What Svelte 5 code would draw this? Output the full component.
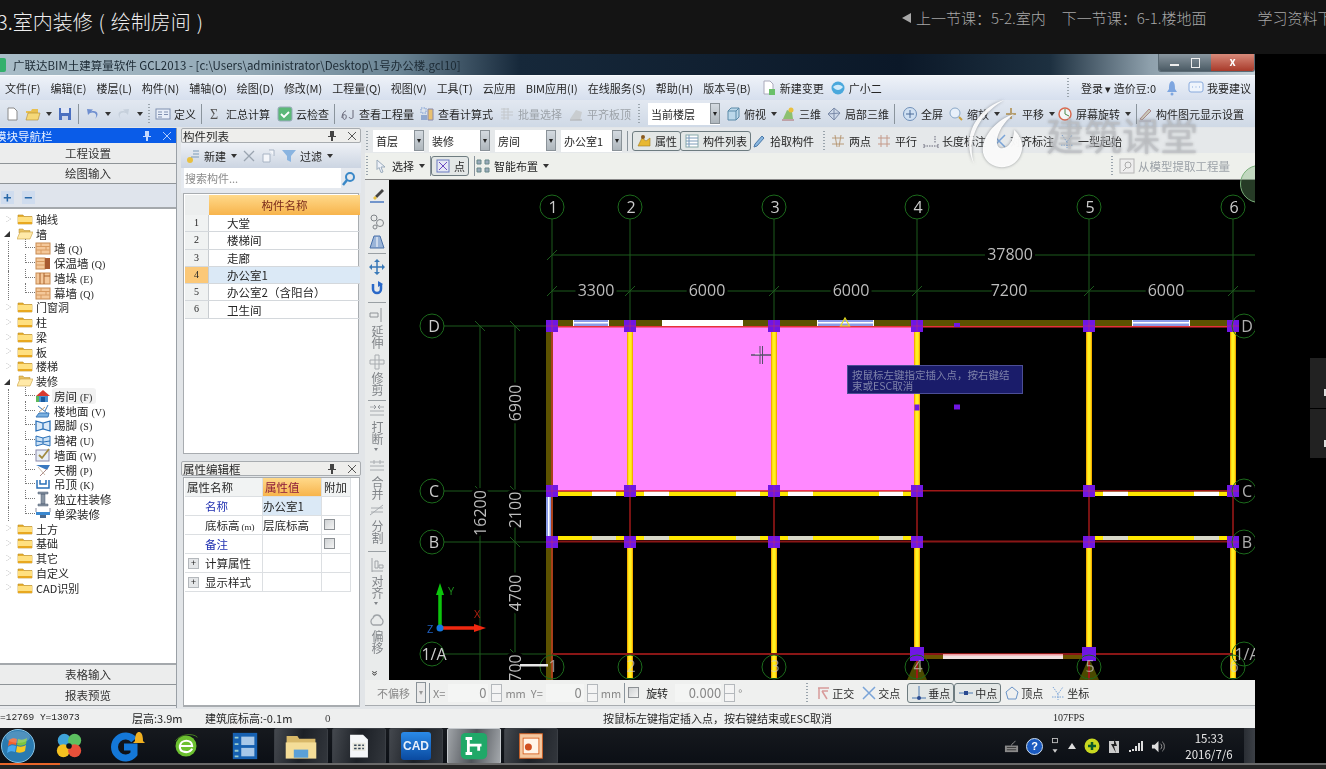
<script>
  const ic = (body) => `<svg viewBox="0 0 16 16" width="16" height="16">${body}</svg>`;
  const icons = {
    doc: ic('<path d="M4 2h6l3 3v9H4z" fill="#fff" stroke="#8a8a8a"/>'),
    open: ic('<path d="M1 5h5l1-2h6v4H1z" fill="#e8c050"/><path d="M1 14l2-7h12l-2 7z" fill="#f5d878" stroke="#b08a30" stroke-width=".6"/>'),
    save: ic('<rect x="2" y="2" width="12" height="12" fill="#4a6fc0"/><rect x="4" y="2" width="8" height="5" fill="#dfe6f5"/><rect x="5" y="10" width="6" height="4" fill="#c9d3ea"/>'),
    undo: ic('<path d="M11 13c3-4 0-8-5-6L4 9 3 3l6 .5-2 2c6-2 9 3 4 7.500z" fill="#6f8fd0"/>'),
    redo: ic('<path d="M5 13c-3-4 0-8 5-6l2 2 1-6-6 .5 2 2C3 3.500 0 8.500 5 13z" fill="#c6d0dc"/>'),
    def: ic('<rect x="1" y="3" width="14" height="10" fill="#e8eef8" stroke="#7f8fb0"/><path d="M3 6h4M3 8.500h4M3 11h4M9 6h4M9 8.500h4" stroke="#7f8fb0"/>'),
    sum: ic('<text x="3" y="13" font-size="14" fill="#555" font-family="Liberation Serif">Σ</text>'),
    cloud: ic('<rect x="1" y="1" width="14" height="14" rx="2" fill="#5cb878" stroke="#9ab"/><path d="M4 8l3 3 5-5" stroke="#fff" stroke-width="1.800" fill="none"/>'),
    sj: ic('<path d="M2 12c0-4 2-7 4-7M3 9c2-1 4 0 3 3s-4 1-3-3M13 4v7c0 2-3 2-4 0" stroke="#667" fill="none"/>'),
    calc: ic('<path d="M2 2h5v5H2z" fill="none" stroke="#7a9ad0" stroke-dasharray="1.500 1"/><path d="M2 9h6v5H2z" fill="#90a8d0"/><path d="M9 3h5v11H9z" fill="#e8c070" stroke="#88a"/>'),
    batch: ic('<path d="M2 3h8M2 6h12M2 9h12M2 12h8M5 2v12M9 2v12" stroke="#c4c8cc"/>'),
    level: ic('<path d="M2 13l6-9 6 2-2 8z" fill="#c9cdd0"/><path d="M2 14h12" stroke="#aaa"/>'),
    top: ic('<path d="M3 5l3-3h8v9l-3 3H3z" fill="#bcd8ea" stroke="#5a8aa8"/><path d="M3 5h8v9M11 5l3-3" stroke="#5a8aa8" fill="none"/>'),
    d3: ic('<path d="M3 13l4-9 5 2 1 7z" fill="#8cc070"/><circle cx="11" cy="4" r="2.500" fill="#e8c040"/><path d="M2 14h12" stroke="#a66"/>'),
    local: ic('<path d="M8 2l6 5-6 7-6-6z" fill="#cdd8e8" stroke="#7a8aa8"/><path d="M8 2v12M2 8l12-1" stroke="#7a8aa8"/>'),
    full: ic('<circle cx="8" cy="8" r="6.500" fill="#cfe0f2" stroke="#6f8fb8"/><path d="M8 4v8M4 8h8" stroke="#4a6a98"/>'),
    zoom: ic('<circle cx="7" cy="7" r="5" fill="#e8f0fa" stroke="#8aa8c8"/><path d="M11 11l3 3" stroke="#c8a040" stroke-width="2"/>'),
    pan: ic('<path d="M8 2v11M3 8h10" stroke="#b8a070" stroke-width="2"/>'),
    rot: ic('<circle cx="8" cy="8" r="6" fill="#f4f6f8" stroke="#d86a50" stroke-width="1.500"/><path d="M8 3v5l4 2" stroke="#4a8a4a" fill="none"/>'),
    set: ic('<path d="M3 13L12 3l2 2-9 9z" fill="#c8c8b8" stroke="#a88"/><path d="M2 15h12" stroke="#88a"/>'),
    newb: ic('<circle cx="5" cy="12" r="3" fill="#e8c040"/><path d="M8 3h6M8 6h6M6 9h8" stroke="#7a9ab8"/>'),
    x: ic('<path d="M3 3l10 10M13 3L3 13" stroke="#9aa4b0" stroke-width="1.300"/>'),
    copy: ic('<path d="M2 6h7v8H2zM8 2h5v6" fill="#f4f6fa" stroke="#a8b4c4"/>'),
    filter: ic('<path d="M1 2h14L10 8v6L6 12V8z" fill="#8ab4e0"/>'),
    mag: ic('<circle cx="9" cy="6" r="4" fill="none" stroke="#3a88c8" stroke-width="2"/><path d="M6 9l-4 5" stroke="#3a88c8" stroke-width="2.500"/>'),
    attr: ic('<path d="M2 13l4-8 4 3 4-3v8z" fill="#e8b830" stroke="#a07820" stroke-width=".6"/><circle cx="7" cy="4" r="2" fill="#8a5a20"/>'),
    list: ic('<rect x="2" y="2" width="12" height="12" fill="#fff" stroke="#8aa"/><path d="M5 2v12M2 5h12M2 8h12M2 11h12" stroke="#7a9ab8"/>'),
    pick: ic('<path d="M3 14l1-3 7-8 2 2-7 8z" fill="#8ab8e0" stroke="#4a78a8"/>'),
    two: ic('<path d="M2 5h12M2 11h12M5 2l2 12M11 2l-2 12" stroke="#b89a78"/>'),
    par: ic('<path d="M2 5h12M2 11h12M5 2v12M11 2v12" stroke="#c49a8a"/>'),
    len: ic('<path d="M1 13h14M1 11v4M15 11v4M12 3v7" stroke="#667" stroke-dasharray="1.500 1"/>'),
    arrow: ic('<path d="M4 2l8 7H8l2 5-2 .5-2-5-2 2z" fill="#eef2f8" stroke="#9ab"/>'),
    pt: ic('<rect x="2" y="2" width="12" height="12" fill="#e4e8f4" stroke="#6a7ac0"/><path d="M4 4l8 8M12 4l-8 8" stroke="#6a4ac0"/>'),
    smart: ic('<path d="M2 2h4v4H2zM10 2h4v4h-4zM2 10h4v4H2zM10 10h4v4h-4z" fill="#9ab" stroke="#688"/>'),
    extract: ic('<rect x="1" y="1" width="14" height="14" fill="#eee" stroke="#b4b4b4"/><circle cx="9" cy="7" r="3" fill="none" stroke="#aaa"/><path d="M7 10l-3 3" stroke="#aaa"/>'),
    ortho: ic('<path d="M3 3h11M4 3v11M7 6h6M7 6l5 8" stroke="#d89a9a" stroke-width="1.500" fill="none"/>'),
    cross: ic('<path d="M2 2l12 12M14 2L2 14" stroke="#7aa4d8" stroke-width="1.500"/>'),
    perp: ic('<path d="M1 13h14M8 1v12" stroke="#4a78b0"/><circle cx="8" cy="13" r="2" fill="#2a4a90"/>'),
    mid: ic('<path d="M1 8h14" stroke="#4a78b0"/><rect x="6" y="6" width="4" height="4" fill="#2a4a90"/>'),
    apex: ic('<path d="M8 2l6 5-2 7H4L2 7z" fill="none" stroke="#6a94c8"/>'),
    coord: ic('<path d="M3 2l5 7 5-7M8 9v6M2 12h12" stroke="#7aa4d8" stroke-dasharray="1.500 1" fill="none"/>'),
    bell: ic('<path d="M8 1c-3 1-3 5-3 8l-2 3h10l-2-3c0-3 0-7-3-8z" fill="#7ea6e0"/><circle cx="8" cy="14" r="1.500" fill="#7ea6e0"/>'),
    chat: ic('<rect x="1" y="2" width="14" height="10" rx="2" fill="#eef4fc" stroke="#88aadd"/><path d="M4 7h1M7.500 7h1M11 7h1" stroke="#88aadd"/>'),
    fnew: ic('<path d="M3 1h6l3 3v10H3z" fill="#fff" stroke="#aab"/><path d="M8 9h6v6H8z" fill="#6ac06a"/>'),
    gxe: ic('<circle cx="8" cy="8" r="6.500" fill="#4aa8dc"/><path d="M3 7c3-3 7-3 10 0-3 4-7 4-10 0z" fill="#cfeafa"/>'),

    brick: ic('<rect x="1" y="3" width="14" height="11" fill="#f4c89a" stroke="#c88a50"/><path d="M1 6.500h14M1 10h14M6 3v3.500M11 6.500V10M6 10v4" stroke="#d89a60"/>'),
    insul: ic('<rect x="1" y="3" width="9" height="11" fill="#f4c89a" stroke="#c88a50"/><rect x="10" y="3" width="5" height="11" fill="#a85a30"/><path d="M1 6.500h9M1 10h9" stroke="#d89a60"/>'),
    pier: ic('<rect x="1" y="3" width="14" height="11" fill="#f4c89a" stroke="#c88a50"/><path d="M5 3v11M9 3v11M9 6h6" stroke="#a8602a"/>'),
    room: ic('<path d="M1 8l7-6 7 6z" fill="#d83a30"/><rect x="3" y="8" width="10" height="6" fill="#4a90d0"/><rect x="6" y="9" width="4" height="5" fill="#1a5aa0"/><rect x="1" y="8" width="3" height="6" fill="#5cb85c"/>'),
    floor: ic('<path d="M1 14l3-4h10l-1 4z" fill="#7ab0e0" stroke="#3a78b8"/><path d="M3 3l9 7M13 2l-3 6" stroke="#3a78b8"/><path d="M4 9l6-5" stroke="#c8a070"/>'),
    skirt: ic('<path d="M1 4l7 2 7-2v10l-7-2-7 2zM8 6v6" fill="#dceaf8" stroke="#2a70b8" stroke-width="1.300"/>'),
    dado: ic('<path d="M1 4l7 2 7-2v10l-7-2-7 2zM8 6v6M1 9l7 1 7-1" fill="#cce2f6" stroke="#2a70b8"/>'),
    wallf: ic('<rect x="1" y="3" width="13" height="11" fill="#e8eef6" stroke="#88a"/><path d="M4 8l3 3 7-9" stroke="#a08a40" stroke-width="1.800" fill="none"/>'),
    ceil: ic('<path d="M1 3h14l-3 5z" fill="#3a78c0"/><path d="M5 14l7-7" stroke="#a88" /><path d="M3 5l7 8" stroke="#cba"/>'),
    hang: ic('<path d="M2 4v8h12V4M5 4v4h6V4" fill="none" stroke="#2a70b8" stroke-width="1.500"/>'),
    colf: ic('<path d="M3 1h10v2H3zM6 3h4v10H6zM3 13h10v2H3z" fill="#8a96a4" stroke="#4a5a70" stroke-width=".5"/>'),
    beam: ic('<path d="M1 6h14v3H1z" fill="#3a88d0"/><path d="M5 9v3h6V9" fill="#4a6a90"/><path d="M1 2v4M15 2v4" stroke="#889"/>'),

    ebrush: ic('<path d="M13 1L6 8l2 2 7-7z" fill="#444"/><path d="M6 8l-2 2 2 2 2-2z" fill="#e8c040"/><path d="M1 14h14" stroke="#4a78c0" stroke-width="1.500"/>'),
    ecirc: ic('<circle cx="5" cy="4" r="3" fill="none" stroke="#808488"/><circle cx="11" cy="9" r="3.500" fill="none" stroke="#808488"/><circle cx="6" cy="13" r="2" fill="none" stroke="#808488"/>'),
    road: ic('<path d="M5 2h6l4 12H1z" fill="#9ab4d8" stroke="#4a70a8"/><path d="M8 3v10" stroke="#fff"/>'),
    move: ic('<path d="M8 1v14M1 8h14" stroke="#3a7ab8" stroke-width="1.500"/><path d="M8 0l3 3H5zM8 16l3-3H5zM0 8l3-3v6zM16 8l-3-3v6z" fill="#3a7ab8"/>'),
    refresh: ic('<path d="M4 4v5a4 4 0 0 0 8 0V4" fill="none" stroke="#2a68c8" stroke-width="2.500"/><path d="M9 1l5 3-5 3z" fill="#2a68c8"/>'),
    extend: ic('<path d="M12 1v14M1 6h8v4H1z" fill="none" stroke="#909498"/>'),
    trim: ic('<path d="M1 6h14v4H1zM6 1h4v14H6z" fill="none" stroke="#a8acb0"/>'),
    brk: ic('<path d="M1 4h5M10 4h5M1 12h14M1 8h14" stroke="#a8acb0"/><path d="M5 2l2 2-2 2M11 2L9 4l2 2" fill="none" stroke="#909498"/>'),
    merge: ic('<path d="M1 4h14M1 12h14M5 2v4M11 2v4M1 8h14" stroke="#a8acb0"/>'),
    split: ic('<path d="M1 13L14 3M2 6h12M2 10h12" stroke="#a8acb0"/>'),
    alignv: ic('<path d="M3 1v14M3 14h11M6 4h3v7H6zM10 8h4v3h-4z" fill="none" stroke="#a0a4a8"/>'),
    offset: ic('<path d="M4 13a4 4 0 0 1 0-7c1-4 7-4 8 0a4 4 0 0 1 0 7z" fill="none" stroke="#a0a4a8" stroke-width="1.300"/>')
  };

  const F = '<path d="M1 4h5l1 1.500h8V13H1z" fill="#e8b030" stroke="#b88a20" stroke-width=".6"/><path d="M1 6h14v7H1z" fill="#ffe080"/><path d="M1 11h14v2H1z" fill="#e8a820"/>';
  const FO = '<path d="M2 3h4l1 1.500h6V7H2z" fill="#e8c060" stroke="#b88a20" stroke-width=".5"/><path d="M0 13l3-7h13l-3 7z" fill="#ffe9a8" stroke="#c8a040" stroke-width=".6"/>';
  icons.fold = ic(F);
  icons.foldo = ic(FO);

  const menus = ['文件(F)', '编辑(E)', '楼层(L)', '构件(N)', '辅轴(O)', '绘图(D)', '修改(M)', '工程量(Q)', '视图(V)', '工具(T)', '云应用', 'BIM应用(I)', '在线服务(S)', '帮助(H)', '版本号(B)'];

  const row1 = [
    { i: 'doc' }, { i: 'open', c: 1 }, { i: 'save' }, { sep: 1 }, { i: 'undo', c: 1 }, { i: 'redo', c: 1, off: 1 }, { grip: 1 },
    { i: 'def', l: '定义' }, { sep: 1 }, { i: 'sum', l: '汇总计算' }, { i: 'cloud', l: '云检查', m: 2 }, { sep: 1 },
    { i: 'sj', l: '查看工程量' }, { i: 'calc', l: '查看计算式' }, { i: 'batch', l: '批量选择', off: 1, m: 1 }, { i: 'level', l: '平齐板顶', off: 1, m: 1 }, { grip: 1, m: 2 },
    { combo: '当前楼层', w: 72, m: 3 }, { i: 'top', l: '俯视', c: 1 }, { i: 'd3', l: '三维', m: -2 }, { i: 'local', l: '局部三维' }, { sep: 1 },
    { i: 'full', l: '全屏', m: 2 }, { i: 'zoom', l: '缩放', c: 1 }, { i: 'pan', l: '平移', c: 1, m: -2 }, { i: 'rot', l: '屏幕旋转', c: 1, m: -3 }, { sep: 1 },
    { i: 'set', l: '构件图元显示设置', m: -5 }
  ];
  const row3 = [
    { grip: 1 }, { combo: '首层', w: 51 }, { combo: '装修', w: 61 }, { combo: '房间', w: 61 }, { combo: '办公室1', w: 61 }, { sep: 1 },
    { i: 'attr', l: '属性', on: 1, m: -1 }, { i: 'list', l: '构件列表', on: 1, m: -6 }, { i: 'pick', l: '拾取构件', m: -5 }, { grip: 1, m: 4 },
    { i: 'two', l: '两点' }, { i: 'par', l: '平行' }, { i: 'len', l: '长度标注', m: 1 }, { i: 'cross', l: '对齐标注' }, { i: 'coord', l: '一型起始' }
  ];
  const row4 = [
    { grip: 1 }, { i: 'arrow', l: '选择', c: 1 }, { sep: 1 }, { i: 'pt', l: '点', on: 1, m: -5 }, { sep: 1 }, { i: 'smart', l: '智能布置', c: 1, m: -5 }
  ];
  const snaps = [
    { i: 'ortho', l: '正交' }, { i: 'cross', l: '交点' }, { i: 'perp', l: '垂点', on: 1 }, { i: 'mid', l: '中点', on: 1, m: -7 }, { i: 'apex', l: '顶点', m: -4 }, { i: 'coord', l: '坐标' }
  ];

  const tree = [
    { t: '轴线' },
    { t: '墙', open: 1 },
    { t: '墙', k: '(Q)', i: 'brick' }, { t: '保温墙', k: '(Q)', i: 'insul' }, { t: '墙垛', k: '(E)', i: 'pier' }, { t: '幕墙', k: '(Q)', i: 'brick', last: 1 },
    { t: '门窗洞' }, { t: '柱' }, { t: '梁' }, { t: '板' }, { t: '楼梯' },
    { t: '装修', open: 1 },
    { t: '房间', k: '(F)', i: 'room', sel: 1 }, { t: '楼地面', k: '(V)', i: 'floor' }, { t: '踢脚', k: '(S)', i: 'skirt' }, { t: '墙裙', k: '(U)', i: 'dado' },
    { t: '墙面', k: '(W)', i: 'wallf' }, { t: '天棚', k: '(P)', i: 'ceil' }, { t: '吊顶', k: '(K)', i: 'hang' }, { t: '独立柱装修', i: 'colf' }, { t: '单梁装修', i: 'beam', last: 1 },
    { t: '土方' }, { t: '基础' }, { t: '其它' }, { t: '自定义' }, { t: 'CAD识别' }
  ];

  const parts = ['大堂', '楼梯间', '走廊', '办公室1', '办公室2（含阳台）', '卫生间'];

  const vtools = [
    { i: 'ebrush', m: 0 }, { i: 'ecirc', m: 10 }, { i: 'road', m: 4 }, { sep: 1, m: 3 }, { i: 'move', m: 5 }, { i: 'refresh', m: 5 }, { sep: 1, m: 6 },
    { i: 'extend', l: '延伸', m: 4 }, { i: 'trim', l: '修剪', m: 5 }, { sep: 1, m: 4 },
    { i: 'brk', l: '打断', m: 2, c: 1 }, { i: 'merge', l: '合并', m: 13 }, { i: 'split', l: '分割', m: 2 }, { sep: 1, m: 7 },
    { i: 'alignv', l: '对齐', m: 5, c: 1 }, { i: 'offset', l: '偏移', m: 13 }
  ];

  // CAD canvas uses page coordinates, see the viewBox
  const xs = [552, 630, 774, 917, 1089, 1233];
  const Y = { D: 326, C: 491, B: 542, A: 654 };
  const spans = [[596, '3300'], [707, '6000'], [851, '6000'], [1009, '7200'], [1166, '6000']];
  const vdims = [[515, 403, '6900'], [515, 510, '2100'], [515, 593, '4700'], [480, 513, '16200']];
  const rows = [['D', Y.D], ['C', Y.C], ['B', Y.B], ['1/A', Y.A]];
  const whiteC = [[592, 616], [644, 669], [736, 760], [788, 813], [879, 903], [1103, 1128], [1194, 1219]];
  const ticksH = [[552, 255], [552, 291], [630, 291], [774, 291], [917, 291], [1089, 291], [1233, 291]];
  const ticksV = [[480, 326], [515, 326], [480, 491], [515, 491], [515, 542], [515, 654]];
  const wins = [[573, 609], [817, 874], [1132, 1190]];
</script>

{#snippet tool(t)}
  {#if t.sep}
    <i class="sep"></i>
  {:else if t.grip}
    <i class="grip" style:margin-left={t.m ? t.m + 'px' : null}></i>
  {:else if t.combo}
    <span class="combo" style:width={t.w + 'px'} style:margin-left={t.m ? t.m + 'px' : null}><span class="val">{t.combo}</span><i class="drop"></i></span>
  {:else}
    <span class="tool" class:off={t.off} class:on={t.on} style:margin-left={t.m ? t.m + 'px' : null}>
      {#if t.i}<span class="ico">{@html icons[t.i]}</span>{/if}
      {#if t.l}<span>{t.l}</span>{/if}
      {#if t.c}<i class="caret"></i>{/if}
    </span>
  {/if}
{/snippet}

{#snippet pbtns()}
  <span class="pbtns">
    <svg viewBox="0 0 8 10" width="8" height="10"><path d="M2 0h4v5h2v1H5v4H3V6H0V5h2z" fill="currentColor" /></svg>
    <svg viewBox="0 0 8 8" width="8" height="8"><path d="M0 0l8 8M8 0L0 8" stroke="currentColor" stroke-width=".9" /></svg>
  </span>
{/snippet}

{#snippet paneltitle(text)}
  <div class="ptitle"><span>{text}</span>{@render pbtns()}</div>
{/snippet}

<div class="page">
  <header class="top">
    <h1>3.室内装修 ( 绘制房间 )</h1>
    <nav>
      <span class="tri"></span>
      <span>上一节课：5-2.室内</span>
      <span class="next">下一节课：6-1.楼地面</span>
      <span class="dl">学习资料下载</span>
    </nav>
  </header>

  <div class="stage">
    <div class="win">
      <div class="titlebar">
        <span class="appico"></span>
        <span class="apptitle">广联达BIM土建算量软件 GCL2013 - [c:\Users\administrator\Desktop\1号办公楼.gcl10]</span>
        <span class="winbtns">
          <span class="wb"><i class="wmin"></i><i class="wmax"></i></span>
          <span class="wclose">x</span>
        </span>
      </div>

      <div class="menubar">
        {#each menus as m}<span>{m}</span>{/each}
        <span class="tool"><span class="ico">{@html icons.fnew}</span>新建变更</span>
        <span class="tool gxe"><span class="ico">{@html icons.gxe}</span>广小二</span>
        <span class="right">
          <i class="grip"></i>
          <span>登录 ▾ 造价豆:0</span>
          <span class="ico">{@html icons.bell}</span>
          <span class="tool"><span class="ico">{@html icons.chat}</span>我要建议</span>
        </span>
      </div>

      <div class="toolbar">
        {#each row1 as t}{@render tool(t)}{/each}
      </div>

      <div class="main">
        <aside class="nav">
          <div class="ptitle blue"><span>模块导航栏</span>{@render pbtns()}</div>
          <button class="bigbtn">工程设置</button>
          <button class="bigbtn">绘图输入</button>
          <div class="pm"><span>+</span><span>−</span></div>
          <ul class="tree">
            {#each tree as n}
              {#if n.i}
                <li class="child" class:last={n.last}>
                  <span class="ico">{@html icons[n.i]}</span>
                  <span class="lab" class:sel={n.sel}>{n.t}{#if n.k}<small>{n.k}</small>{/if}</span>
                </li>
              {:else}
                <li class="fold">
                  <i class={n.open ? 'tw open' : 'tw'}></i>
                  <span class="ico">{@html n.open ? icons.foldo : icons.fold}</span>
                  <span class="lab">{n.t}</span>
                </li>
              {/if}
            {/each}
          </ul>
          <button class="bigbtn">表格输入</button>
          <button class="bigbtn">报表预览</button>
        </aside>

        <section class="mid">
          {@render paneltitle('构件列表')}
          <div class="listbar">
            <span class="tool"><span class="ico">{@html icons.newb}</span>新建<i class="caret"></i></span>
            <span class="ico">{@html icons.x}</span>
            <span class="ico">{@html icons.copy}</span>
            <span class="tool"><span class="ico">{@html icons.filter}</span>过滤<i class="caret"></i></span>
          </div>
          <div class="search"><span class="hint">搜索构件...</span><span class="ico">{@html icons.mag}</span></div>
          <div class="listbox">
            <div class="lrow head"><span></span><span class="hname">构件名称</span></div>
            {#each parts as p, i}
              <div class="lrow" class:cur={i === 3}><span class="no">{i + 1}</span><span class="nm">{p}</span></div>
            {/each}
          </div>

          {@render paneltitle('属性编辑框')}
          <div class="propbox">
            <div class="prow phead"><span>属性名称</span><span class="pval">属性值</span><span>附加</span></div>
            <div class="prow"><span class="in link">名称</span><span class="cv">办公室1</span><span></span></div>
            <div class="prow"><span class="in">底标高<small>(m)</small></span><span>层底标高</span><span><i class="chk"></i></span></div>
            <div class="prow"><span class="in link">备注</span><span></span><span><i class="chk"></i></span></div>
            <div class="prow"><span class="in"><i class="plus">+</i>计算属性</span><span></span><span></span></div>
            <div class="prow"><span class="in"><i class="plus">+</i>显示样式</span><span></span><span></span></div>
          </div>
        </section>

        <section class="cad">
          <div class="toolbar r3">
            {#each row3 as t}{@render tool(t)}{/each}
          </div>
          <div class="toolbar r4">
            {#each row4 as t}{@render tool(t)}{/each}
            <span class="extract"><i class="grip"></i><span class="tool off"><span class="ico">{@html icons.extract}</span>从模型提取工程量</span></span>
          </div>
          <div class="work">
            <div class="vbar">
              {#each vtools as t}
                {#if t.sep}
                  <hr style:margin-top={t.m + 'px'} />
                {:else}
                  <span class="ico" style:margin-top={t.m + 'px'}>{@html icons[t.i]}</span>
                  {#if t.l}<span class="vtxt" class:arrowed={t.c}>{t.l}</span>{/if}
                {/if}
              {/each}
              <span class="more">»</span>
            </div>
            <div class="canvas">
              <svg viewBox="389 180 866 500" width="866" height="500">
                <!-- axes -->
                <g stroke="#1c5a1c" stroke-width="1" fill="none">
                  {#each xs as x}<line x1={x} y1="219" x2={x} y2="320" />{/each}
                  <line x1="552" y1="255" x2="1255" y2="255" />
                  <line x1="552" y1="291" x2="1255" y2="291" />
                  <line x1="480" y1="326" x2="480" y2="680" />
                  <line x1="515" y1="326" x2="515" y2="680" />
                  {#each rows as r}<line x1="444" y1={r[1]} x2="548" y2={r[1]} />{/each}
                  {#each ticksH as t}<line x1={t[0] - 5} y1={t[1] + 5} x2={t[0] + 5} y2={t[1] - 5} />{/each}
                  {#each ticksV as t}<line x1={t[0] - 5} y1={t[1] - 5} x2={t[0] + 5} y2={t[1] + 5} />{/each}
                </g>

                <rect x="552" y="327" width="365" height="164" fill="#ff88ff" />

                <!-- walls -->
                <rect x="546" y="320" width="6" height="360" fill="#5c5200" />
                <rect x="551" y="327" width="2" height="353" fill="#a8401a" />
                <rect x="546" y="497" width="5" height="39" fill="#8a9ce8" />
                <rect x="548" y="497" width="1.500" height="39" fill="#fff" />
                <rect x="546" y="320" width="687" height="6" fill="#5c5200" />
                {#each wins as w}
                  <rect x={w[0]} y="320" width={w[1] - w[0]} height="6" fill="#8a9ce8" />
                  <rect x={w[0]} y="322" width={w[1] - w[0]} height="1.500" fill="#fff" />
                  <rect x={w[0]} y="320" width="1" height="6" fill="#fff" />
                  <rect x={w[1] - 1} y="320" width="1" height="6" fill="#fff" />
                {/each}
                <rect x="662" y="320" width="81" height="6" fill="#fff" />
                <rect x="552" y="326" width="681" height="1.500" fill="#e8303a" />
                <path d="M840.500 326l4.500-8 4.500 8z" fill="none" stroke="#e8e020" stroke-width="1.200" />

                {#each xs.slice(1) as x}
                  <rect x={x - 3} y="326" width="6" height="165" fill="#f4ac00" />
                  <rect x={x - 1.750} y="326" width="3.500" height="165" fill="#fff020" />
                  <rect x={x - 3} y="542" width="6" height={x === 917 || x === 1089 ? 112 : 136} fill="#f4ac00" />
                  <rect x={x - 1.750} y="542" width="3.500" height={x === 917 || x === 1089 ? 112 : 136} fill="#fff020" />
                  <line x1={x} y1="491" x2={x} y2="542" stroke="#a01818" stroke-width="1.500" />
                {/each}

                {#each [[491.500, 4.500], [536, 4]] as h}
                  <rect x="552" y={h[0]} width="365" height={h[1]} fill="#ffe800" />
                  <rect x="1089" y={h[0]} width="144" height={h[1]} fill="#ffe800" />
                  {#each whiteC as w}
                    <rect x={w[0]} y={h[0]} width={w[1] - w[0]} height={h[1]} fill={h[0] > 500 ? '#d8d8c8' : '#fff'} />
                  {/each}
                {/each}
                <rect x="552" y="490" width="365" height="1.500" fill="#f03050" />
                <rect x="917" y="490" width="316" height="1.500" fill="#a01818" />
                <rect x="552" y="540.500" width="681" height="2" fill="#8a1616" />
                <rect x="552" y="653" width="681" height="2" fill="#8a1616" />

                <rect x="917" y="655" width="172" height="4" fill="#6a5200" />
                <rect x="943" y="654" width="120" height="5" fill="#f0e0e0" />
                <rect x="943" y="654" width="120" height="1.500" fill="#f09aa0" />
                <path d="M907 680l8-18h4l8 18zM1079 680l8-18h4l8 18z" fill="#4a4a00" />
                <rect x="916" y="655" width="2" height="25" fill="#a01818" />
                <rect x="1088" y="655" width="2" height="25" fill="#a01818" />

                <!-- columns -->
                <g fill="#7016e4">
                  {#each xs as x}
                    {#each [Y.D, Y.C, Y.B] as y}
                      <rect x={x - 6} y={y - 6} width="12" height="12" />
                    {/each}
                  {/each}
                  <rect x="910" y="647" width="14" height="14" />
                  <rect x="1082" y="647" width="14" height="14" />
                  <rect x="954" y="323" width="6" height="4" />
                  <rect x="954" y="404.500" width="6" height="5" />
                  <rect x="914.500" y="404.500" width="5" height="6" />
                </g>
                <g stroke="#c83060" stroke-width=".6">
                  {#each xs as x}
                    <line x1={x} y1="320" x2={x} y2="332" />
                    <line x1={x - 6} y1="326" x2={x + 6} y2="326" />
                    <line x1={x} y1="485" x2={x} y2="497" />
                    <line x1={x - 6} y1="491" x2={x + 6} y2="491" />
                    <line x1={x} y1="536" x2={x} y2="548" />
                    <line x1={x - 6} y1="542" x2={x + 6} y2="542" />
                  {/each}
                </g>

                <!-- balloons -->
                <g stroke="#1c6a1c" fill="none">
                  {#each xs as x}
                    <circle cx={x} cy="207" r="12" />
                    <circle cx={x} cy="667" r="12" />
                  {/each}
                  {#each rows as r}
                    <circle cx="432" cy={r[1]} r="12" />
                    <circle cx="1244" cy={r[1]} r="12" />
                  {/each}
                </g>

                <g class="cadtxt">
                  {#each xs as x, i}
                    <text x={x + 1} y="212.500">{i + 1}</text>
                    <text x={x + 1} y="672" opacity=".65">{i + 1}</text>
                  {/each}
                  {#each rows as r}
                    <text x="434" y={r[1] + 5.500}>{r[0]}</text>
                    <text x="1247" y={r[1] + 5.500} opacity=".85">{r[0]}</text>
                  {/each}
                </g>
                <g class="cadtxt halo">
                  <text x="1010" y="260">37800</text>
                  {#each spans as s}<text x={s[0]} y="296">{s[1]}</text>{/each}
                  {#each vdims as v}
                    <text transform="translate({v[0] + 5.500} {v[1]}) rotate(-90)">{v[2]}</text>
                  {/each}
                  <text transform="translate(520.500 668) rotate(-90)">700</text>
                </g>
                <rect x="520" y="664" width="28" height="2.500" fill="#e8e8e8" />

                <!-- origin gizmo -->
                <path d="M440 628V594" stroke="#0cc40c" stroke-width="3.500" />
                <path d="M440 583l-4 12h8z" fill="#0cc40c" />
                <path d="M440 628h36" stroke="#f02810" stroke-width="3.500" />
                <path d="M486 628l-12-4v8z" fill="#f02810" />
                <circle cx="440" cy="628" r="3.500" fill="#1478e0" />
                <text class="axis" x="448" y="595" fill="#1c8a1c">Y</text>
                <text class="axis" x="474" y="618" fill="#b02010">X</text>
                <text class="axis" x="427" y="633" fill="#2060c0">Z</text>

                <!-- cursor -->
                <path d="M751 355h20" stroke="#56506a" stroke-width="1.500" />
                <path d="M760 346v18M762.500 346v18" stroke="#56506a" />
                <path d="M755 354h5" stroke="#fff" stroke-width=".6" />
              </svg>
              <div class="tip">按鼠标左键指定插入点，按右键结束或ESC取消</div>
            </div>
          </div>
          <div class="snapbar">
            <div class="combo off2"><span class="val">不偏移</span><i class="drop"></i></div>
            <i class="sep"></i>
            <span>X=</span><span class="num n0">0</span><i class="spin"></i><span>mm</span>
            <span class="ymark">Y=</span><span class="num n1">0</span><i class="spin"></i><span>mm</span>
            <i class="sep"></i>
            <i class="chk"></i>
            <span class="rot">旋转</span>
            <span class="num n2">0.000</span><i class="spin"></i><span>°</span>
            <span class="snaps">
              <i class="grip"></i>
              {#each snaps as t}{@render tool(t)}{/each}
            </span>
          </div>
          <span class="blob"></span>
        </section>
      </div>

      <div class="status">
        <span class="coords">=12769 Y=13073</span>
        <span class="s2">层高:3.9m</span>
        <span class="s3">建筑底标高:-0.1m</span>
        <span class="s4">0</span>
        <span class="msg">按鼠标左键指定插入点，按右键结束或ESC取消</span>
        <span class="fps">107FPS</span>
      </div>

      <div class="taskbar">
        <span class="orb">
          <svg viewBox="0 0 34 34" width="34" height="34">
            <circle cx="17" cy="17" r="16.500" fill="#2a7ab0" stroke="#8cc4e4" />
            <path d="M8 11c3-2 5-2 8-1l-1 6c-3-1-5-1-8 1z" fill="#f0602c" />
            <path d="M17 10c3 1 6 1 9-1l-1 6c-3 2-6 2-9 1z" fill="#7cc440" />
            <path d="M7 18c3-2 5-2 8-1l-1 6c-3-1-5-1-8 1z" fill="#48a8f0" />
            <path d="M16 17c3 1 6 1 9-1l-1 6c-3 2-6 2-9 1z" fill="#f8c820" />
            <ellipse cx="17" cy="8" rx="12" ry="6" fill="#fff" opacity=".18" />
          </svg>
        </span>
        <span class="tb"><svg viewBox="0 0 32 32" width="30" height="30"><circle cx="11" cy="10" r="7" fill="#3fa2d8"/><circle cx="22" cy="10" r="7" fill="#5cc060"/><circle cx="10" cy="21" r="7" fill="#f4c020"/><circle cx="22" cy="21" r="7" fill="#e8503a"/><circle cx="16" cy="16" r="3" fill="#0d1219"/></svg></span>
        <span class="tb"><svg viewBox="0 0 38 32" width="38" height="32"><path d="M25 10A11 11 0 1 0 25 24V17H15" fill="none" stroke="#1478d8" stroke-width="7"/><path d="M26 11c0-7 2-9 4-9s4 2 4 9l2 2H24z" fill="#f0b020"/></svg></span>
        <span class="tb"><svg viewBox="0 0 32 32" width="28" height="28"><circle cx="16" cy="16" r="12" fill="#6cc030"/><path d="M9 16h14c0-8-13-8-14 0s11 9 14 3" fill="none" stroke="#fff" stroke-width="2.500"/><path d="M4 10C10 2 24 1 29 6" fill="none" stroke="#4a8a20" /></svg></span>
        <span class="tb"><svg viewBox="0 0 32 32" width="30" height="30"><rect x="3" y="2" width="26" height="28" fill="#1660b0"/><rect x="12" y="6" width="14" height="9" fill="#a8c8e8"/><rect x="12" y="18" width="14" height="9" fill="#a8c8e8"/><path d="M5 7h4M5 14h4M5 21h4M5 27h4" stroke="#9cc" stroke-width="2"/></svg></span>
        <span class="tbtn"><svg viewBox="0 0 40 32" width="36" height="30"><path d="M4 5h12l2 3h18v6H4z" fill="#d8b868"/><path d="M3 12h34v18H3z" fill="#f4dd98"/><path d="M12 20h16v9H12z" fill="#5aa0d8"/></svg></span>
        <span class="tbtn"><svg viewBox="0 0 32 32" width="26" height="28"><path d="M5 2h16l6 6v22H5z" fill="#f4f6f8"/><path d="M8 12h16v10H8z" fill="#e8e8e0"/><path d="M10 15h3M15 15h3M20 15h2M10 19h3M15 19h3M20 19h2" stroke="#345" stroke-width="2"/></svg></span>
        <span class="tbtn"><span class="cadico">CAD</span></span>
        <span class="tbtn act"><svg viewBox="0 0 32 32" width="30" height="30"><rect x="2" y="2" width="28" height="28" rx="5" fill="#20a868"/><path d="M7 8h7M10 8v16M7 24h7M10 15h14M21 15v6" stroke="#fff" stroke-width="3" fill="none"/></svg></span>
        <span class="tbtn"><svg viewBox="0 0 32 32" width="28" height="28"><rect x="3" y="2" width="26" height="28" fill="#f4c8a0" stroke="#d86020"/><rect x="7" y="7" width="18" height="18" fill="#fff4e8" stroke="#d86020"/><circle cx="13" cy="17" r="4" fill="#d05020"/></svg></span>
        <span class="tray">
          <svg viewBox="0 0 16 16" width="15" height="15"><path d="M1 7h14v7H1z" fill="#8a8a8a"/><path d="M3 9h10M3 11.500h10" stroke="#333"/><path d="M8 7c0-3 3-2 4-5" stroke="#888" fill="none"/></svg>
          <span class="help">?</span>
          <svg viewBox="0 0 12 20" width="10" height="18"><rect x="3" y="1" width="6" height="5" fill="none" stroke="#ccc"/><path d="M3 14h6l-3 4z" fill="#ccc"/></svg>
          <svg viewBox="0 0 10 10" width="10" height="10"><path d="M5 2l4 6H1z" fill="#ddd"/></svg>
          <svg viewBox="0 0 16 16" width="16" height="16"><circle cx="8" cy="8" r="7.500" fill="#c8d820"/><path d="M8 4v8M4 8h8" stroke="#0a5a2a" stroke-width="2.500"/></svg>
          <svg viewBox="0 0 14 16" width="14" height="16"><path d="M2 3h10v12H2z" fill="#ccc"/><path d="M7 0l3 8H7l2 7-5-9h3z" fill="#222"/></svg>
          <svg viewBox="0 0 16 12" width="16" height="12"><path d="M1 11h2M5 11V9M8 11V6M11 11V3M14 11V1" stroke="#ddd" stroke-width="2"/></svg>
          <svg viewBox="0 0 16 16" width="15" height="15"><path d="M1 6h3l4-4v12l-4-4H1z" fill="#ddd"/><path d="M10 5c2 1 2 5 0 6M12 3c3 2 3 8 0 10" stroke="#999" fill="none"/></svg>
          <span class="clock">15:33<br />2016/7/6</span>
          <span class="desk"></span>
        </span>
      </div>

      <div class="watermark">
        <svg viewBox="0 0 64 68" width="64" height="68">
          <path d="M40 0C14 8-4 36 10 64 2 38 16 14 40 0Z" fill="#fff" opacity=".92" />
          <path d="M50 14C30 20 14 42 20 56c6 14 28 16 36 0 5-11 1-20-6-26 0 10-6 20-14 18C28 44 36 24 50 14Z" fill="#fff" opacity=".94" />
        </svg>
        <span>建筑课堂</span>
      </div>
    </div>

    <div class="side">
      <span class="sidebtn"></span>
      <span class="sidebtn"></span>
    </div>
  </div>

  <div class="progress"><i></i></div>
</div>

<style>
  :global(body) {
    margin: 0;
    background: #000;
  }
  .page {
    width: 1326px;
    height: 769px;
    overflow: hidden;
    font-family: "Noto Sans CJK SC", "Liberation Sans", sans-serif;
    background: #000;
  }
  .top {
    height: 54px;
    background: #141414;
    color: #eee;
    display: flex;
    position: relative;
  }
  .top h1 {
    margin: 8px 0 0 -3px;
    font-size: 20px;
    font-weight: 300;
    line-height: 27px;
    word-spacing: 1.5px;
    white-space: nowrap;
  }
  .top nav {
    margin-left: auto;
    padding-top: 8px;
    width: 424px;
    display: flex;
    color: #a8a8a8;
    font-size: 15px;
    font-weight: 300;
    line-height: 20px;
    white-space: nowrap;
    overflow: hidden;
  }
  .tri {
    width: 0;
    height: 0;
    margin: 5px 5px 0 0;
    border: 5.5px solid transparent;
    border-left: 0;
    border-right: 9px solid #a8a8a8;
  }
  .next { margin-left: 16px; }
  .dl { margin-left: 51px; }

  .stage {
    height: 709px;
    display: flex;
  }
  .win {
    width: 1255px;
    height: 709px;
    flex: none;
    position: relative;
    overflow: hidden;
    display: flex;
    flex-direction: column;
    background: #e2e5e8;
    font-size: 11px;
    color: #262626;
    filter: blur(.5px);
  }
  .ico {
    display: inline-flex;
    flex: none;
  }
  .ico :global(svg) { display: block; }

  .titlebar {
    height: 21px;
    flex: none;
    display: flex;
    align-items: center;
    background: linear-gradient(90deg, #a9bdc8 0, #93a9b6 250px, #6a8494 400px, #16283a 520px, #0b1828 900px, #1d3040 1050px, #8ea0ac 1150px, #c4d0d8 1255px);
    white-space: nowrap;
  }
  .appico {
    width: 8px;
    height: 14px;
    margin-left: -2px;
    border-radius: 0 2px 2px 0;
    background: #34b06c;
  }
  .apptitle {
    margin-left: 7px;
    font-size: 11.5px;
    color: #1c2a34;
  }
  .winbtns {
    margin-left: auto;
    height: 17px;
    align-self: flex-start;
    display: flex;
    border: 1px solid #5a6a74;
    border-top: 0;
    border-radius: 0 0 3px 3px;
    overflow: hidden;
  }
  .wb {
    width: 52px;
    display: flex;
    align-items: center;
    justify-content: space-evenly;
    background: linear-gradient(#8a97a0, #4a5a64);
  }
  .wmin { width: 9px; height: 2px; margin-top: 5px; background: #eee; }
  .wmax { width: 7px; height: 8px; border: 1.5px solid #eee; }
  .wclose {
    width: 43px;
    background: linear-gradient(#d88a7a, #a83a2a);
    color: #fff;
    font-weight: 700;
    font-size: 11px;
    line-height: 15px;
    text-align: center;
  }

  .menubar {
    height: 25px;
    flex: none;
    display: flex;
    align-items: center;
    gap: 10px;
    padding-left: 5px;
    box-sizing: border-box;
    background: linear-gradient(#eef2f8, #d6dfee);
    border-top: 1px solid #f8fafc;
    white-space: nowrap;
  }
  .menubar .gxe { margin-left: -4px; }
  .menubar .right {
    margin-left: auto;
    margin-right: 4px;
    display: flex;
    align-items: center;
    gap: 8px;
  }
  .menubar .right .grip { margin-right: 4px; }
  .tool {
    display: inline-flex;
    align-items: center;
    gap: 3px;
    flex: none;
    white-space: nowrap;
  }
  .tool.off {
    color: #9ca2a8;
  }
  .tool.on {
    padding: 0 3px;
    height: 20px;
    background: #e3e7e6;
    border: 1px solid #6e7c80;
    border-radius: 3px;
    box-sizing: border-box;
  }
  .caret {
    width: 0;
    height: 0;
    margin-left: 2px;
    border: 3px solid transparent;
    border-top: 4px solid #333;
    border-bottom: 0;
  }
  .sep {
    width: 1px;
    height: 20px;
    flex: none;
    background: #8a949c;
  }
  .grip {
    width: 2px;
    height: 20px;
    flex: none;
    background: repeating-linear-gradient(#9aa4ac 0 1px, transparent 1px 3px);
  }
  .toolbar {
    height: 27px;
    flex: none;
    display: flex;
    align-items: center;
    gap: 5px;
    padding-left: 4px;
    box-sizing: border-box;
    background: linear-gradient(#e2e8f1, #cfd9e6);
    white-space: nowrap;
  }
  .combo {
    display: inline-flex;
    align-items: center;
    height: 22px;
    flex: none;
    box-sizing: border-box;
    background: #fff;
  }
  .combo .val {
    flex: 1;
    padding-left: 3px;
    white-space: nowrap;
  }
  .drop {
    width: 10px;
    height: 21px;
    flex: none;
    position: relative;
    background: linear-gradient(#d4dae0, #aeb6bc);
    border: 1px solid #8a9298;
    box-sizing: border-box;
  }
  .drop::after {
    content: "";
    position: absolute;
    left: 1.5px;
    top: 8px;
    border: 2.5px solid transparent;
    border-top: 4px solid #222;
    border-bottom: 0;
  }

  .main {
    height: 581px;
    flex: none;
    display: flex;
    gap: 4px;
    padding-top: 1px;
    box-sizing: border-box;
  }
  .ptitle {
    height: 15px;
    flex: none;
    display: flex;
    justify-content: space-between;
    align-items: center;
    padding: 0 4px 0 1px;
    background: #eeeeec;
    border: 1px solid #a8acb0;
    border-radius: 2px;
    box-sizing: border-box;
    font-size: 11.5px;
    white-space: nowrap;
  }
  .pbtns {
    display: flex;
    gap: 12px;
    align-items: center;
    color: #444;
  }
  .ptitle.blue {
    background: #0a5ce8;
    border-color: #0a5ce8;
    color: #eaf2ff;
    border-radius: 0;
    padding-left: 0;
  }
  .ptitle.blue > span:first-child { margin-left: -6px; }
  .ptitle.blue .pbtns { color: #c4d8ff; }

  .nav {
    width: 177px;
    flex: none;
    display: flex;
    flex-direction: column;
    padding-bottom: 2.5px;
    border-right: 1px solid #9aa0a6;
    box-sizing: border-box;
    background: #e9ebee;
  }
  .bigbtn {
    height: 20.5px;
    flex: none;
    padding: 0;
    border: 0;
    border-bottom: 1px solid #8f9498;
    background: #eceded;
    font: inherit;
    font-size: 11.5px;
    color: #333;
  }
  .pm {
    height: 25px;
    flex: none;
    display: flex;
    align-items: flex-end;
    gap: 8px;
    padding: 0 0 3px 1px;
    box-sizing: border-box;
    background: #dfe4ec;
    border-bottom: 2px solid #a4a8ac;
  }
  .pm span {
    width: 13px;
    height: 13px;
    background: #cfdcee;
    color: #2868a8;
    font-size: 14px;
    font-weight: 700;
    line-height: 12px;
    text-align: center;
  }
  .tree {
    flex: 1;
    margin: 0;
    padding: 2.5px 0 0;
    list-style: none;
    background: #fff;
    border-bottom: 2px solid #a4a8ac;
    box-sizing: border-box;
  }
  .tree li {
    height: 14.75px;
    position: relative;
    display: flex;
    align-items: center;
    white-space: nowrap;
  }
  .fold { padding-left: 17px; }
  .fold .lab { margin-left: 3px; }
  .child { padding-left: 35px; }
  .child .lab { margin-left: 3px; font-size: 11.5px; }
  .child small { margin-left: 3px; font: 10px "Liberation Serif", serif; }
  .child::before {
    content: "";
    position: absolute;
    left: 25px;
    top: -2px;
    bottom: 50%;
    width: 9px;
    border-left: 1px dotted #777;
    border-bottom: 1px dotted #777;
  }
  .child::after {
    content: "";
    position: absolute;
    left: 8px;
    top: 0;
    bottom: 0;
    border-left: 1px dotted #777;
  }
  .lab.sel {
    padding: 0 4px 0 2px;
    margin-left: 1px;
    background: #f2f2f2;
    border-radius: 3px;
  }
  .tw {
    position: absolute;
    left: 6px;
    top: 4px;
    border: 3px solid transparent;
    border-left: 5px solid #fff;
    width: 0;
    height: 0;
    filter: drop-shadow(0 0 .6px #666);
  }
  .tw.open {
    left: 4px;
    top: 5px;
    border: 0;
    border-bottom: 6px solid #333;
    border-left: 6px solid transparent;
    filter: none;
  }

  .mid {
    width: 180px;
    flex: none;
    display: flex;
    flex-direction: column;
  }
  .listbar {
    height: 25px;
    flex: none;
    display: flex;
    align-items: center;
    gap: 4px;
    padding-left: 4px;
    box-sizing: border-box;
    background: linear-gradient(#eef1f6, #ccd5e2);
  }
  .search {
    height: 25px;
    flex: none;
    display: flex;
    align-items: flex-start;
    justify-content: space-between;
    padding-right: 4px;
    background: #e5e9ef;
  }
  .search .ico { margin-top: 3px; }
  .hint {
    width: 156px;
    height: 20px;
    margin-left: 3px;
    padding-left: 1px;
    background: #fff;
    color: #8c8c8c;
    line-height: 20px;
  }
  .listbox {
    height: 261px;
    flex: none;
    margin: 0 2px 7px 2px;
    padding: 1px 0 0 1px;
    background: #fff;
    border: 1px solid #a8acb0;
    box-sizing: border-box;
  }
  .lrow {
    width: 175px;
    height: 17.3px;
    display: grid;
    grid-template-columns: 24px 1fr;
    align-items: center;
    border-bottom: 1px solid #d4d8dc;
    box-sizing: border-box;
    font-size: 11.5px;
  }
  .lrow.head {
    height: 20px;
    background: #eceeee;
    border-bottom: 0;
  }
  .hname {
    height: 100%;
    background: linear-gradient(#ffd98a, #f7b44c);
    color: #7a2a1a;
    line-height: 20px;
    text-align: center;
  }
  .no {
    height: 100%;
    background: #f0f2f2;
    border-right: 1px solid #c8ccd0;
    text-align: center;
    font: 10px/16px "Liberation Serif", serif;
  }
  .nm { padding-left: 18px; }
  .lrow.cur { background: #dbe9f6; }
  .lrow.cur .no { background: #fbc878; }

  .propbox {
    flex: 1;
    margin: 1px 1px 1px 2px;
    padding: 0 0 0 1px;
    background: #fff;
    border: 1px solid #a8acb0;
    border-bottom: 2px solid #a8acb0;
    box-sizing: border-box;
  }
  .prow {
    width: 166px;
    height: 19px;
    display: grid;
    grid-template-columns: 78px 59px 29px;
    align-items: stretch;
    border-bottom: 1px solid #dcdfe2;
    box-sizing: border-box;
    font-size: 11.5px;
    line-height: 18px;
  }
  .prow span {
    border-right: 1px solid #dcdfe2;
    white-space: nowrap;
    overflow: hidden;
  }
  .phead span { padding-left: 2px; background: #f1f3f3; }
  .phead span.pval {
    background: linear-gradient(#ffd98a, #f7b44c);
    color: #8a1a3a;
  }
  .in { padding-left: 20px; }
  .in small { font: 9px "Liberation Serif", serif; margin-left: 2px; }
  .link { color: #1f2fb0; }
  .cv { background: #dbe9f6; }
  .prow .chk { margin: 3px 0 0 2px; }
  .chk {
    display: inline-block;
    width: 11px;
    height: 11px;
    flex: none;
    background: linear-gradient(135deg, #cfd2d4, #f4f4f4);
    border: 1px solid #8c9094;
    box-sizing: border-box;
  }
  .plus {
    position: absolute;
    margin: 4px 0 0 -17px;
    width: 9px;
    height: 9px;
    background: #e4e6e8;
    border: 1px solid #b4b8bc;
    font-style: normal;
    font-size: 9px;
    line-height: 8px;
    text-align: center;
  }

  .cad {
    width: 890px;
    flex: none;
    display: flex;
    flex-direction: column;
    position: relative;
  }
  .r3 {
    height: 25px;
    padding-left: 1px;
    background: #e5e8ea;
    gap: 5px;
  }
  .r4 {
    height: 27px;
    padding-left: 1px;
    background: #eef0ec;
    border-bottom: 1px solid #8a8a8a;
  }
  .extract {
    margin-left: auto;
    margin-right: 25px;
    display: flex;
    align-items: center;
    gap: 6px;
    font-size: 11.5px;
  }
  .work {
    height: 500px;
    flex: none;
    display: flex;
    overflow: hidden;
  }
  .vbar {
    width: 24px;
    flex: none;
    display: flex;
    flex-direction: column;
    align-items: center;
    padding-top: 8px;
    box-sizing: border-box;
    background: #e9ebeb;
    color: #808488;
    position: relative;
  }
  .vbar hr {
    width: 18px;
    height: 1px;
    flex: none;
    margin-bottom: 0;
    border: 0;
    background: #9aa0a4;
  }
  .vtxt {
    flex: none;
    position: relative;
    width: 12px;
    height: 24px;
    margin-top: 2px;
    writing-mode: vertical-rl;
    white-space: nowrap;
    line-height: 12px;
    font-size: 12px;
  }
  .vtxt.arrowed::after {
    content: "";
    position: absolute;
    left: 3px;
    top: 27px;
    border: 2.5px solid transparent;
    border-top: 3px solid #808488;
    border-bottom: 0;
  }
  .more {
    position: absolute;
    left: 8px;
    bottom: 1px;
    transform: rotate(90deg);
    color: #333;
    font-size: 12px;
    line-height: 12px;
  }
  .canvas {
    width: 866px;
    height: 500px;
    flex: none;
    position: relative;
    background: #000;
    overflow: hidden;
  }
  .canvas svg { display: block; }
  .cadtxt text {
    fill: #cccccc;
    font: 16px "Open Sans", sans-serif;
    text-anchor: middle;
  }
  .cadtxt.halo text {
    fill: #bdbdbd;
    stroke: #000;
    stroke-width: 6px;
    paint-order: stroke;
  }
  .axis { font: 11px "Open Sans", sans-serif; }
  .tip {
    position: absolute;
    left: 458px;
    top: 185px;
    width: 176px;
    height: 29px;
    padding: 3px 6px 0 4px;
    box-sizing: border-box;
    background: #1a1c6a;
    border: 1px solid #4c4e96;
    color: #7f83aa;
    font-size: 10.5px;
    line-height: 11px;
  }
  .blob {
    position: absolute;
    left: 875px;
    top: 37px;
    width: 36px;
    height: 36px;
    border-radius: 50%;
    background: rgba(110, 170, 110, .35);
    border: 1px solid #7ab07a;
  }
  .snapbar {
    height: 26px;
    flex: none;
    display: flex;
    align-items: center;
    gap: 3px;
    padding-left: 9px;
    box-sizing: border-box;
    background: #eff0ef;
    border-bottom: 1px solid #a8acb0;
    color: #888;
  }
  .combo.off2 { width: 52px; background: transparent; color: #8a8a8a; }
  .combo.off2 .drop { background: #eaeaea; }
  .combo.off2 .drop::after { border-top-color: #999; }
  .num {
    text-align: right;
    background: #f4f5f4;
    height: 18px;
    font-size: 13px;
    line-height: 18px;
    padding-right: 2px;
  }
  .n0 { width: 38px; }
  .n1 { width: 36px; }
  .n2 { width: 46px; margin-left: 4px; padding-right: 0; }
  .spin {
    width: 11px;
    height: 18px;
    border: 1px solid #b4b8bc;
    box-sizing: border-box;
    background: linear-gradient(#f4f4f4 48%, #b4b8bc 48% 54%, #f4f4f4 54%);
    flex: none;
  }
  .ymark { margin-left: 2px; }
  .rot { margin-left: 4px; color: #222; }
  .snaps {
    margin-left: 61px;
    display: flex;
    align-items: center;
    gap: 7px;
    color: #2b2b2b;
  }
  .snaps .tool { gap: 1px; }

  .status {
    height: 19px;
    padding-bottom: 2px;
    margin-top: 1px;
    flex: none;
    display: flex;
    align-items: center;
    box-sizing: border-box;
    background: #eeefef;
    white-space: nowrap;
    position: relative;
  }
  .coords {
    width: 132px;
    font: 9.5px "Liberation Mono", monospace;
  }
  .s2 { width: 73px; }
  .s3 { width: 120px; }
  .s4 { width: 278px; color: #444; font-family: "Liberation Serif", serif; }
  .msg { width: 450px; font-size: 11px; }
  .fps { width: 60px; font: 10px "Liberation Serif", serif; }

  .taskbar {
    height: 36px;
    flex: 1;
    display: flex;
    align-items: center;
    background: linear-gradient(#16191e, #0b0f15);
  }
  .orb {
    width: 34px;
    height: 34px;
    margin: 0 5px 0 1px;
    flex: none;
  }
  .tb {
    width: 58.5px;
    display: flex;
    justify-content: center;
    flex: none;
  }
  .tbtn {
    width: 54px;
    height: 36px;
    margin-right: 3.5px;
    flex: none;
    display: flex;
    align-items: center;
    justify-content: center;
    border: 1px solid #3a3e44;
    box-sizing: border-box;
    background: linear-gradient(100deg, #44484e, #1c2026 50%, #32363c);
    border-radius: 2px;
  }
  .tbtn.act {
    background: linear-gradient(100deg, #a0a4a8, #50545a 50%, #a4a8ac);
    border-color: #c4c8cc;
  }
  .cadico {
    width: 30px;
    height: 28px;
    background: linear-gradient(#2a8ae8, #0a4aa0);
    border-radius: 3px;
    color: #e8f0fa;
    font: 700 12px/28px "Liberation Sans", sans-serif;
    text-align: center;
  }
  .tray {
    margin-left: auto;
    display: flex;
    align-items: center;
    gap: 7px;
    color: #e8e8e8;
  }
  .help {
    width: 15px;
    height: 15px;
    border-radius: 50%;
    background: #1a5ac0;
    border: 1px solid #cde;
    color: #fff;
    font: 700 11px/15px "Liberation Sans", sans-serif;
    text-align: center;
  }
  .clock {
    width: 70px;
    margin: 0 -7px 0 1px;
    text-align: center;
    font-size: 11.5px;
    line-height: 16px;
  }
  .desk {
    width: 11px;
    height: 36px;
    background: linear-gradient(90deg, #2a2e34, #3c4046);
  }

  .watermark {
    position: absolute;
    left: 964px;
    top: 46px;
    display: flex;
    align-items: center;
    gap: 18px;
    pointer-events: none;
    filter: drop-shadow(0 0 1.5px rgba(100, 104, 110, .7));
  }
  .watermark span {
    font-size: 38px;
    line-height: 42px;
    color: rgba(190, 192, 195, .6);
    white-space: nowrap;
  }

  .side {
    flex: 1;
    display: flex;
    flex-direction: column;
    align-items: flex-end;
    gap: 1px;
    padding-top: 304px;
    box-sizing: border-box;
  }
  .sidebtn {
    width: 16px;
    height: 49.5px;
    position: relative;
    background: #222;
  }
  .sidebtn::after {
    content: "";
    position: absolute;
    right: 0;
    top: 31px;
    width: 2px;
    height: 7px;
    background: #ddd;
  }

  .progress {
    height: 6px;
    background: #242424;
    border-top: 2px solid #6a6a6a;
    box-sizing: border-box;
    position: relative;
  }
  .progress i {
    position: absolute;
    left: 0;
    top: -2px;
    width: 60px;
    height: 2px;
    background: #e8662a;
  }
</style>
